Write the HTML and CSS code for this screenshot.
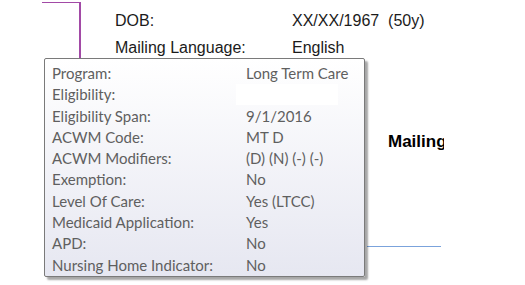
FILE: index.html
```html
<!DOCTYPE html>
<html lang="en">
<head>
  <meta charset="UTF-8" />
  <title>Member Details</title>
  <link rel="stylesheet" href="styles.css">
</head>
<body>
  <div class="page">
    <div class="frame"></div>

    <div class="fields">
      <span class="field-label">DOB:</span>
      <span class="field-value">XX/XX/1967&nbsp; (50y)</span>
      <span class="field-label">Mailing Language:</span>
      <span class="field-value">English</span>
    </div>

    <div class="mailing">Mailing</div>
    <div class="rule"></div>

    <!-- hover tooltip over the program grid -->
    <div class="tooltip">
      <div class="tip-row"><span>Program:</span><span>Long Term Care</span></div>
      <div class="tip-row"><span>Eligibility:</span><span class="redacted"></span></div>
      <div class="tip-row"><span>Eligibility Span:</span><span>9/1/2016</span></div>
      <div class="tip-row"><span>ACWM Code:</span><span>MT D</span></div>
      <div class="tip-row"><span>ACWM Modifiers:</span><span>(D) (N) (-) (-)</span></div>
      <div class="tip-row"><span>Exemption:</span><span>No</span></div>
      <div class="tip-row"><span>Level Of Care:</span><span>Yes (LTCC)</span></div>
      <div class="tip-row"><span>Medicaid Application:</span><span>Yes</span></div>
      <div class="tip-row"><span>APD:</span><span>No</span></div>
      <div class="tip-row"><span>Nursing Home Indicator:</span><span>No</span></div>
    </div>
  </div>
</body>
</html>
```

FILE: styles.css
```css
body {
  margin: 0;
  background: #fff;
  font-family: 'Liberation Sans', Arial, sans-serif;
  color: #1b1b1b;
}
.page {
  position: relative;
  width: 525px;
  height: 285px;
  overflow: hidden;
}
.frame {
  margin-left: 42px;
  margin-top: 2px;
  width: 37px;
  height: 70px;
  border-top: 1px solid #a24aa6;
  border-right: 2px solid #a24aa6;
}
.fields {
  display: grid;
  grid-template-columns: 177px auto;
  row-gap: 5px;
  margin-top: -63px;
  margin-left: 115px;
  font-size: 16px;
  line-height: 22px;
}
.mailing {
  margin: 72px 0 0 388px;
  width: 56px;
  overflow: hidden;
  white-space: nowrap;
  font-weight: bold;
  font-size: 17px;
  line-height: 21px;
  color: #000;
}
.rule {
  margin: 94px 0 0 367px;
  width: 74px;
  border-top: 1px solid #7ba3dc;
}
.tooltip {
  position: absolute;
  left: 44px;
  top: 58px;
  width: 321px;
  height: 219px;
  box-sizing: border-box;
  padding: 4px 0 0 7px;
  border: 1px solid #7a7a7a;
  border-radius: 2px;
  background: linear-gradient(#ffffff, #e6e7f1);
  box-shadow: 3px 3px 2px rgba(0, 0, 0, 0.35);
  font-family: Lato, sans-serif;
  font-size: 15px;
  color: #5f5f5f;
}
.tip-row {
  display: grid;
  grid-template-columns: 194px auto;
  height: 21.3px;
  line-height: 21px;
  white-space: nowrap;
}
.redacted {
  display: block;
  width: 102px;
  height: 21px;
  margin-left: -10px;
  background: #fff;
}
```
